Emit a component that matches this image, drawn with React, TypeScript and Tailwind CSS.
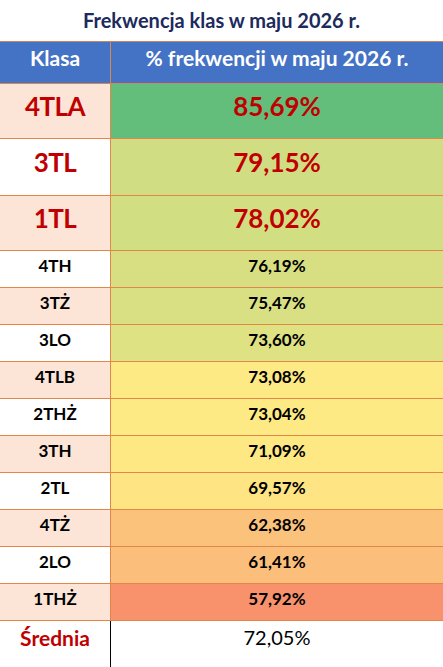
const rows = [
  { klasa: "4TLA", value: "85,69%", bg: "bg-[#63be7b]", big: true, h: "h-[54px]" },
  { klasa: "3TL", value: "79,15%", bg: "bg-[#d1dd82]", big: true, h: "h-[56px]" },
  { klasa: "1TL", value: "78,02%", bg: "bg-[#d2de82]", big: true, h: "h-[54px]" },
  { klasa: "4TH", value: "76,19%", bg: "bg-[#d7df82]", h: "h-[36px]" },
  { klasa: "3TŻ", value: "75,47%", bg: "bg-[#d9e083]", h: "h-[36px]" },
  { klasa: "3LO", value: "73,60%", bg: "bg-[#dee283]", h: "h-[36px]" },
  { klasa: "4TLB", value: "73,08%", bg: "bg-[#feea84]", h: "h-[36px]" },
  { klasa: "2THŻ", value: "73,04%", bg: "bg-[#feea84]", h: "h-[36px]" },
  { klasa: "3TH", value: "71,09%", bg: "bg-[#fee884]", h: "h-[36px]" },
  { klasa: "2TL", value: "69,57%", bg: "bg-[#fee483]", h: "h-[36px]" },
  { klasa: "4TŻ", value: "62,38%", bg: "bg-[#fbc27c]", h: "h-[36px]" },
  { klasa: "2LO", value: "61,41%", bg: "bg-[#fbbe7b]", h: "h-[36px]" },
  { klasa: "1THŻ", value: "57,92%", bg: "bg-[#f8926c]", h: "h-[36px]" },
];

export default function App() {
  return (
    <div className="w-[443px] h-[667px] overflow-hidden bg-white font-['Lato',sans-serif] font-bold">
      <div className="h-[41px] flex items-center justify-center pb-[1px] text-[20px] text-[#1c2a5c]">
        Frekwencja klas w maju 2026 r.
      </div>
      <div className="border-t border-[#c8875a]">
        <div className="flex h-[42px] bg-[#4472c4] text-white text-[21px] border-b border-[#d9864e]">
          <div className="w-[111px] shrink-0 flex items-center justify-center pb-[10px] border-r border-[#d9864e]">
            Klasa
          </div>
          <div className="flex-1 flex items-center justify-center pb-[10px]">
            % frekwencji w maju 2026 r.
          </div>
        </div>
        {rows.map((r, i) => (
          <div key={r.klasa} className="flex border-b border-[#e3864a]">
            <div
              className={`w-[111px] shrink-0 flex items-center justify-center border-r border-[#e3864a] ${r.h} ${
                i % 2 === 0 ? "bg-[#fce4d6]" : "bg-white"
              } ${r.big ? "text-[26px] tracking-[-0.5px] text-[#c00000] pb-[10px]" : "text-[17px] text-black pb-[6px]"}`}
            >
              {r.klasa}
            </div>
            <div
              className={`flex-1 flex items-center justify-center ${r.bg} ${
                r.big ? "text-[26px] text-[#c00000] pb-[10px]" : "text-[17px] text-black pb-[6px]"
              }`}
            >
              {r.value}
            </div>
          </div>
        ))}
        <div className="flex h-[46px]">
          <div className="w-[111px] shrink-0 flex justify-center pt-[1px] border-r border-black text-[#c00000] text-[21px]">
            Średnia
          </div>
          <div className="flex-1 flex justify-center pt-[1px] text-[20px] font-normal text-black">
            72,05%
          </div>
        </div>
      </div>
    </div>
  );
}
